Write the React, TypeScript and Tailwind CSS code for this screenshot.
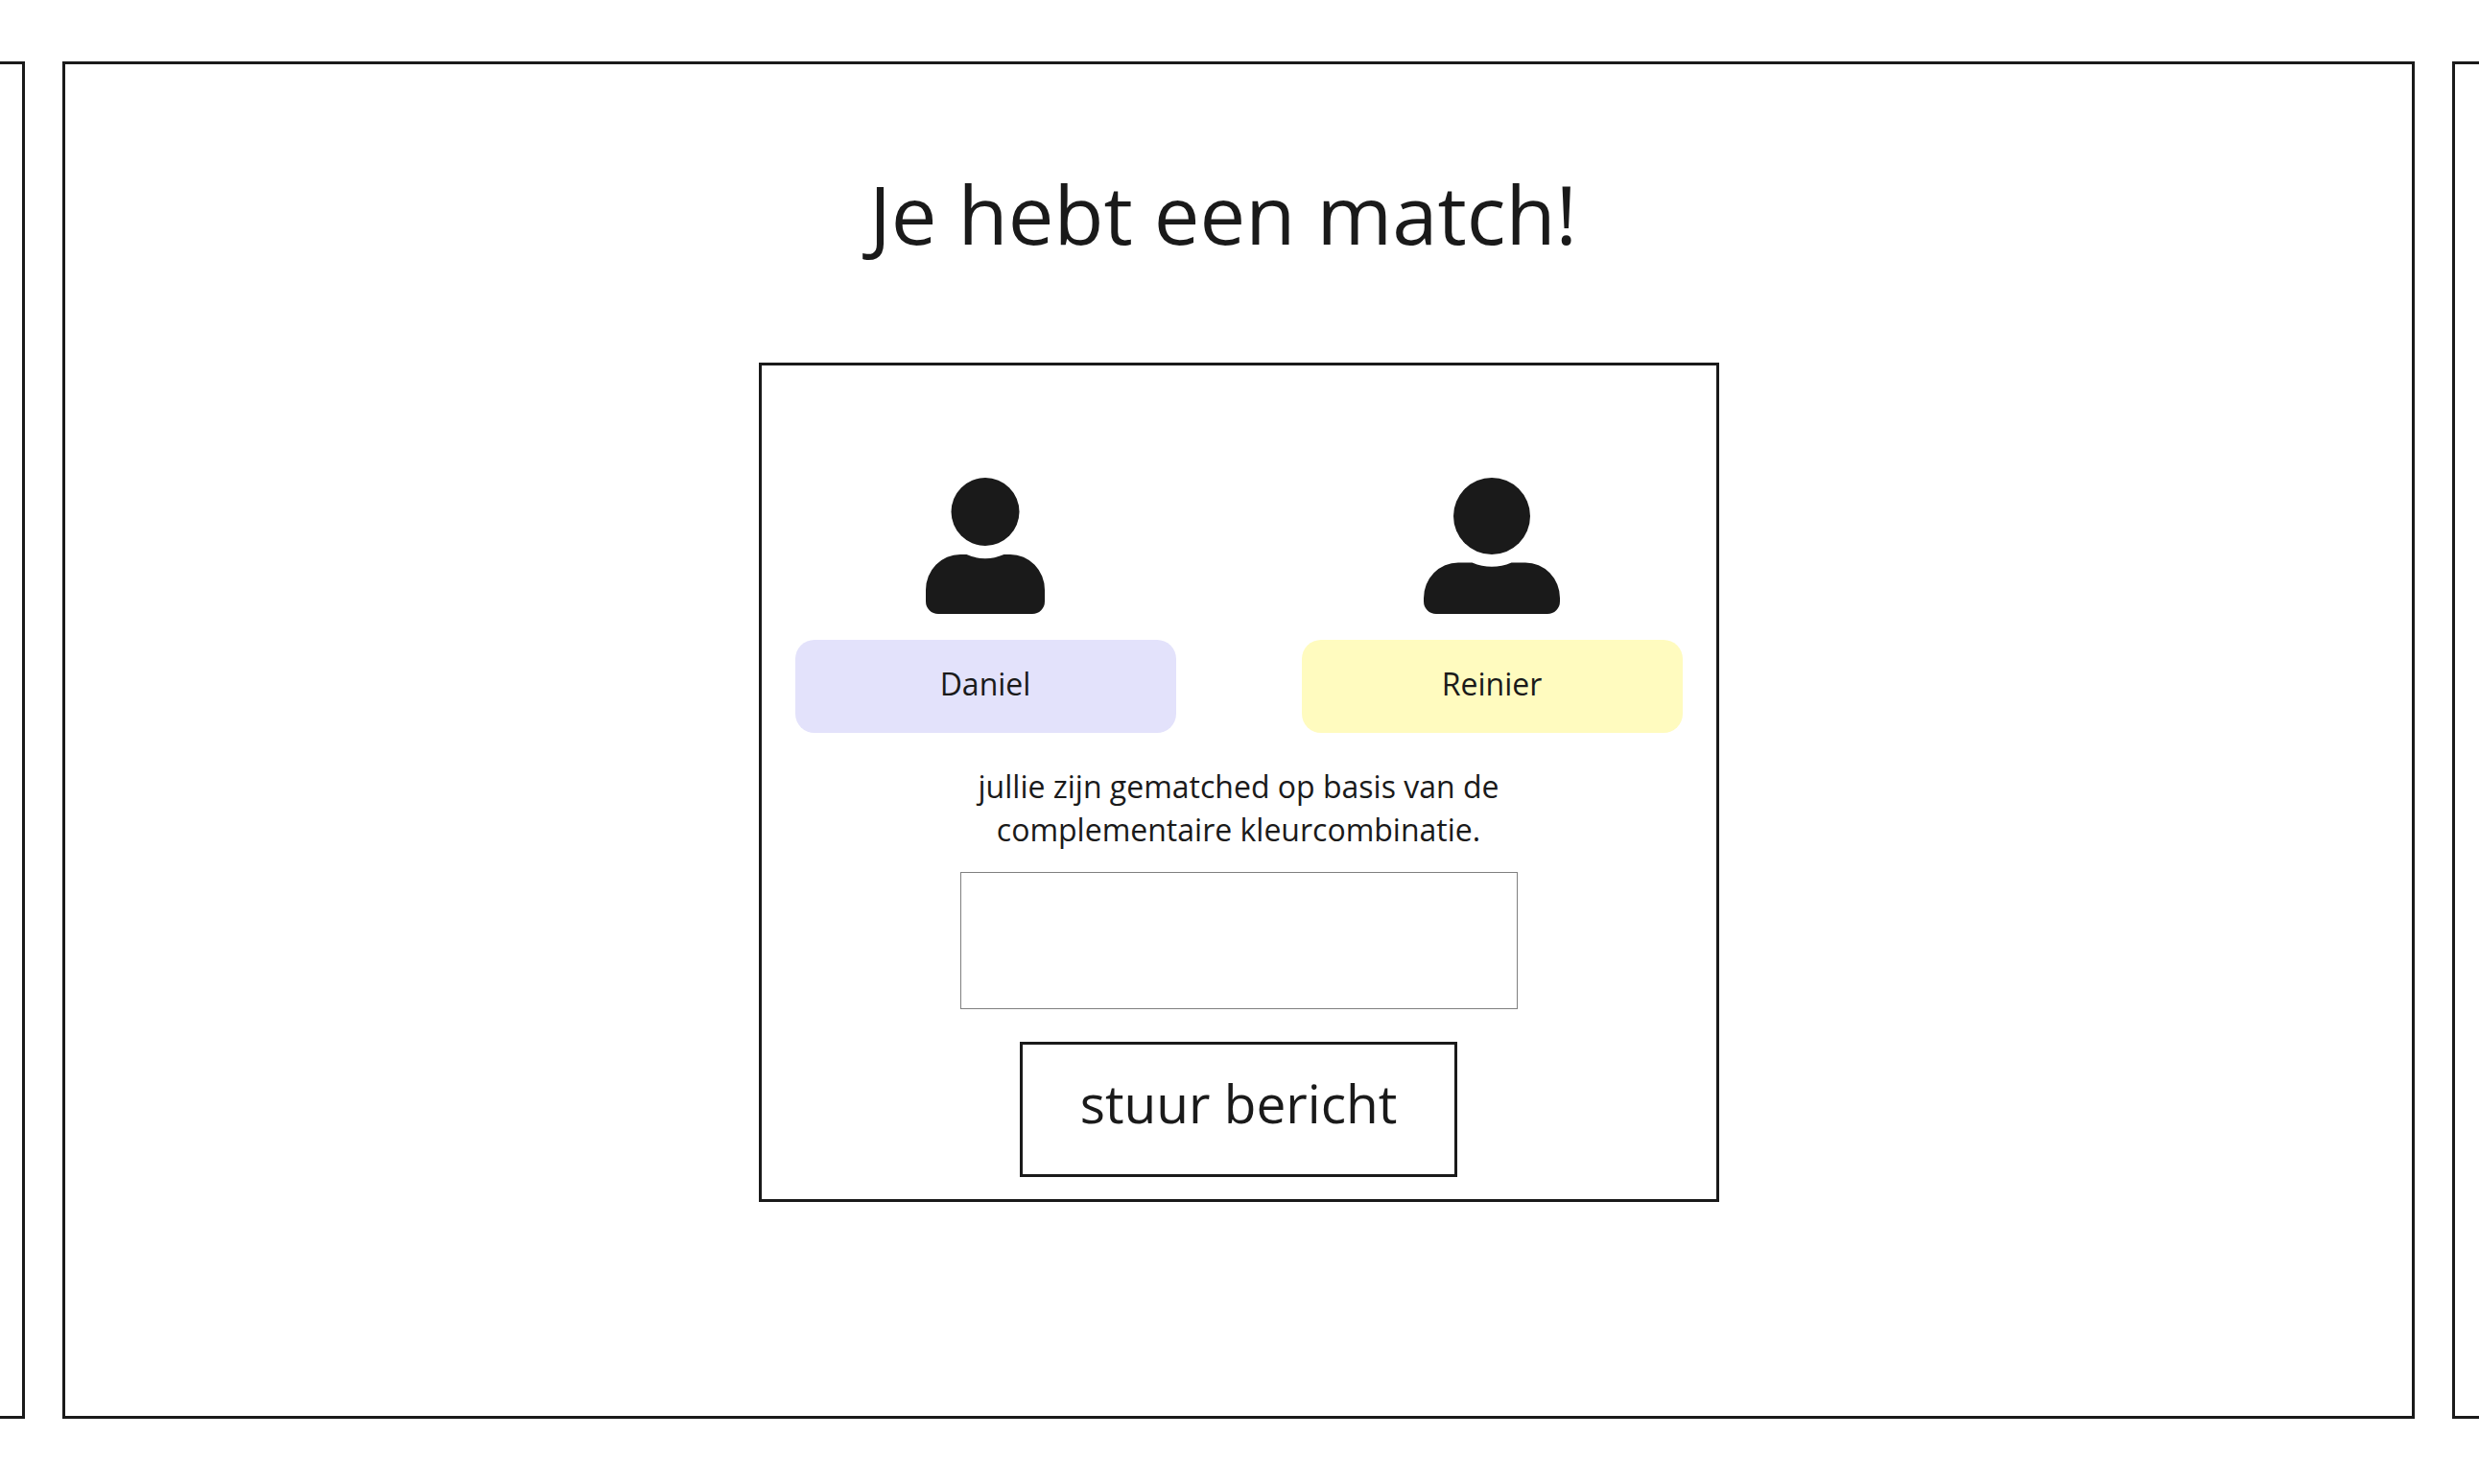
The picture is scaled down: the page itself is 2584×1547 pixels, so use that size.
import React from "react";

function DanielAvatar() {
  return (
    <svg width="124" height="142" viewBox="0 0 124 142" fill="#1a1a1a" aria-hidden="true">
      <circle cx="62" cy="35.5" r="35.5" />
      <path d="M36 80H42.5A49 49 0 0 0 81.5 80H88A36 37 0 0 1 124 117V129A13 13 0 0 1 111 142H13A13 13 0 0 1 0 129V117A36 37 0 0 1 36 80Z" />
    </svg>
  );
}

function ReinierAvatar() {
  return (
    <svg width="142" height="142" viewBox="0 0 142 142" fill="#1a1a1a" aria-hidden="true">
      <circle cx="71" cy="40" r="40" />
      <path d="M36 88.5H50.5A53 53 0 0 0 91.5 88.5H106A36 37 0 0 1 142 125.5V129A13 13 0 0 1 129 142H13A13 13 0 0 1 0 129V125.5A36 37 0 0 1 36 88.5Z" />
    </svg>
  );
}

export default function App() {
  return (
    <div className="flex min-h-screen gap-[39px] overflow-hidden bg-white pt-16 pb-[68px] font-['Open_Sans','Noto_Sans',sans-serif] text-[#1a1a1a]">
      <aside className="w-[26px] shrink-0 border-y-3 border-r-3 border-[#1a1a1a]" />

      <main className="flex flex-1 flex-col items-center border-3 border-[#1a1a1a] px-6 pt-24 pb-6">
        <h1 className="pr-8 text-center text-[85px] leading-[118px]">Je hebt een match!</h1>

        <section className="mt-[97px] flex w-full max-w-[1001px] flex-col items-center border-3 border-[#1a1a1a] px-[35px] pt-[117px] pb-[23px]">
          <div className="grid w-full grid-cols-2 gap-[131px]">
            <div className="flex flex-col items-center gap-[27px]">
              <DanielAvatar />
              <div className="w-full rounded-[20px] bg-[#e3e2fb] pt-[23px] pb-[29px] text-center text-[32px] leading-[45px]">
                Daniel
              </div>
            </div>
            <div className="flex flex-col items-center gap-[27px]">
              <ReinierAvatar />
              <div className="w-full rounded-[20px] bg-[#fffbbf] pt-[23px] pb-[29px] text-center text-[32px] leading-[45px]">
                Reinier
              </div>
            </div>
          </div>

          <form className="mt-[33px] flex w-full flex-col items-center" onSubmit={(e) => e.preventDefault()}>
            <label htmlFor="bericht" className="max-w-[580px] text-center text-[32px] leading-[45px]">
              jullie zijn gematched op basis van de complementaire kleurcombinatie.
            </label>
            <textarea
              id="bericht"
              className="mt-[22px] block h-[143px] w-full max-w-[581px] resize-none border border-[#808080] px-4 py-3 text-[32px] leading-[45px] outline-none"
            />
            <button
              type="submit"
              className="mt-[34px] border-3 border-[#1a1a1a] px-[60px] pt-[23px] pb-[37px] text-[55px] leading-[75px]"
            >
              stuur bericht
            </button>
          </form>
        </section>
      </main>

      <aside className="w-7 shrink-0 border-y-3 border-l-3 border-[#1a1a1a]" />
    </div>
  );
}
